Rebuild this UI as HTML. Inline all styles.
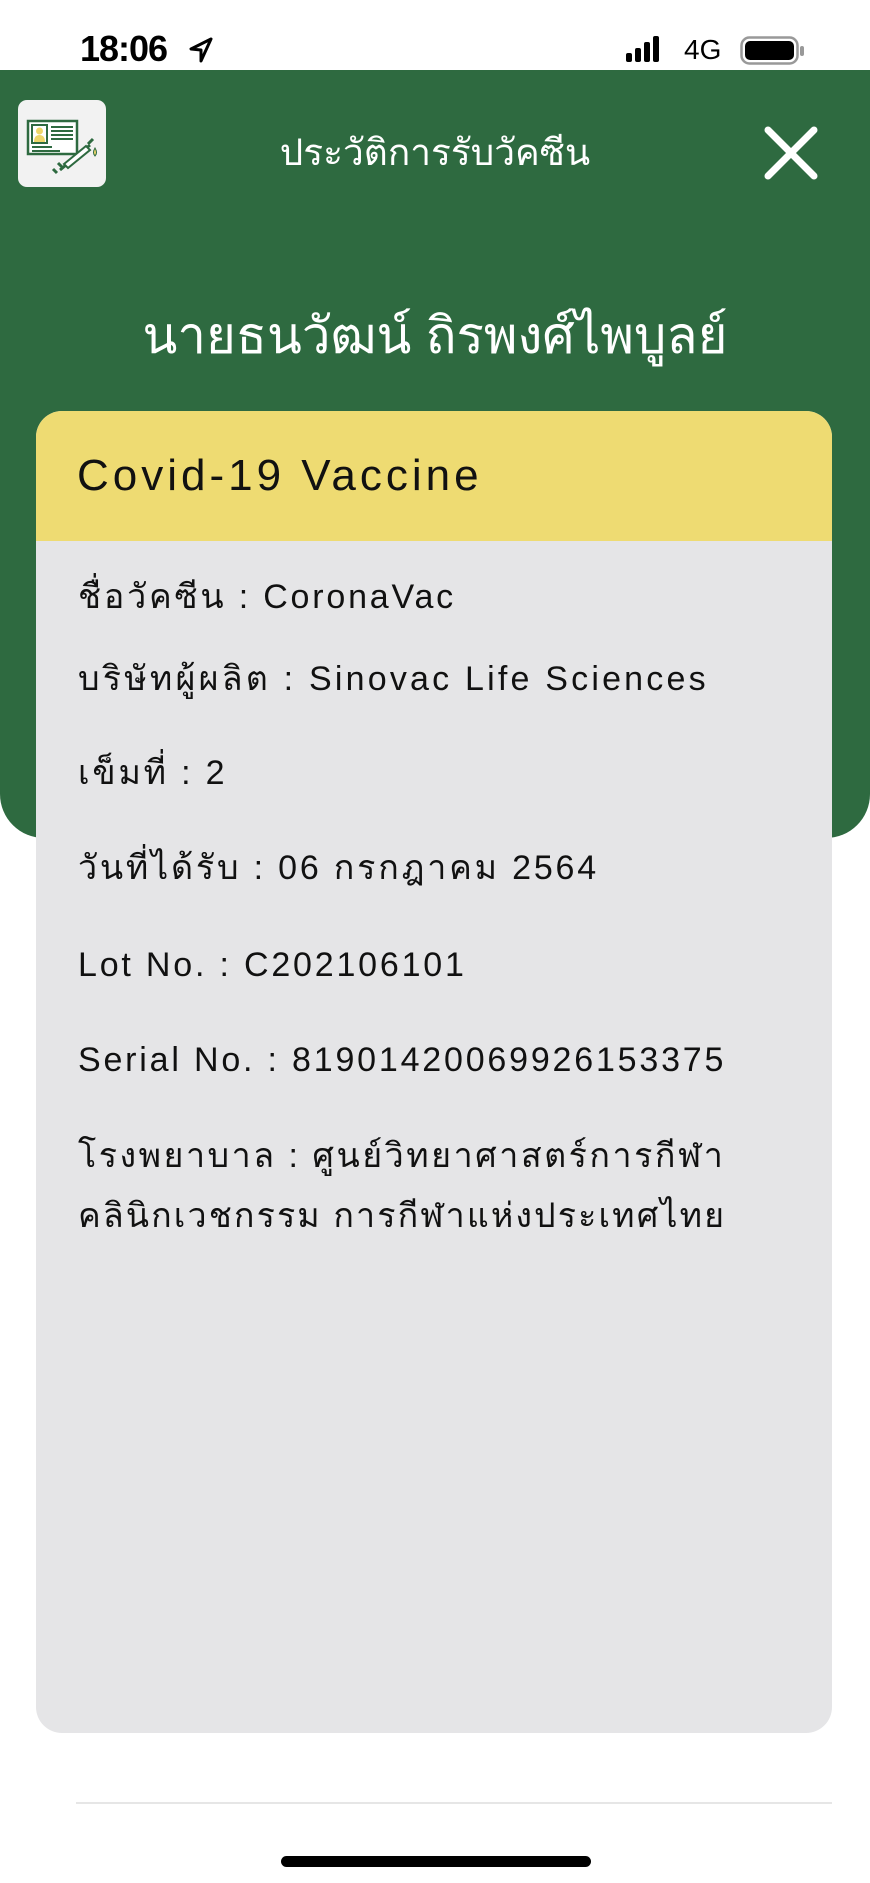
<!DOCTYPE html>
<html><head><meta charset="utf-8">
<style>
*{margin:0;padding:0;box-sizing:border-box}
body{width:870px;height:1883px;background:#fff;position:relative;overflow:hidden;font-family:"Liberation Sans","Noto Sans CJK SC",sans-serif}
.abs{position:absolute}
.green{left:0;top:70px;width:870px;height:768px;background:#2e6a40;border-radius:0 0 44px 44px}
.logo{left:18px;top:100px;width:88px;height:87px;background:#f2f2f2;border-radius:9px}
.title{left:0;width:870px;top:126px;text-align:center;color:#fff;font-size:37px;line-height:54px}
.name{left:0;width:870px;top:302px;text-align:center;color:#fff;font-size:51px;line-height:68px}
.card{left:36px;top:411px;width:796px;height:1322px;background:#e5e5e7;border-radius:26px;overflow:hidden}
.card .hd{height:130px;background:#eedb72;padding-left:41px;font-size:44px;letter-spacing:4px;line-height:130px;color:#111}
.line{left:78px;font-size:34px;letter-spacing:2.8px;color:#111;line-height:44px;white-space:nowrap}
</style></head><body>
<div class="abs" style="left:80px;top:28px;font-size:36px;font-weight:bold;color:#000;letter-spacing:-1px">18:06</div>
<svg class="abs" style="left:188px;top:36px" width="26" height="28" viewBox="0 0 26 28"><path d="M23 3 L3 13 L13 14 L13 25 Z" fill="none" stroke="#000" stroke-width="3" stroke-linejoin="round"/></svg>
<svg class="abs" style="left:626px;top:36px" width="48" height="28"><rect x="0" y="17" width="6" height="9" rx="2"/><rect x="9" y="12" width="6" height="14" rx="2"/><rect x="18" y="6" width="6" height="20" rx="2"/><rect x="27" y="0" width="6" height="26" rx="2"/></svg>
<div class="abs" style="left:684px;top:34px;font-size:28px;color:#000">4G</div>
<svg class="abs" style="left:740px;top:36px" width="66" height="30"><rect x="1.5" y="1.5" width="56" height="26" rx="8" fill="none" stroke="#999" stroke-width="2.5"/><rect x="5" y="5" width="49" height="19" rx="5" fill="#000"/><rect x="60" y="10" width="4" height="10" rx="2" fill="#999"/></svg>

<div class="abs green"></div>
<div class="abs logo"></div>
<svg class="abs" style="left:18px;top:100px" width="88" height="87" viewBox="0 0 88 87">
<rect x="10" y="21" width="49" height="33" fill="#fff" stroke="#2e6a40" stroke-width="2.5"/>
<rect x="14" y="25" width="15" height="18" fill="#fff" stroke="#2e6a40" stroke-width="2"/>
<path d="M16 42 Q16 35 21.5 35 Q27 35 27 42 Z" fill="#eed66a"/><circle cx="21.5" cy="31" r="3.5" fill="#eed66a"/>
<path d="M33 27h22M33 31h22M33 35h22M33 39h22M14 47h20M14 51h28" stroke="#2e6a40" stroke-width="2"/>
<path d="M42 70 L72 45 M45 68 L40 63 M39 73 L35 69 M65 48 L69 52 M70 44 L75 39" stroke="#2e6a40" stroke-width="3" fill="none"/>
<path d="M46 64 L68 46 L72 50 L50 68 Z" fill="#fff" stroke="#2e6a40" stroke-width="2"/>
<path d="M77 48 Q80 53 77 56 Q74 53 77 48Z" fill="#eed66a" stroke="#2e6a40" stroke-width="1"/>
</svg>
<div class="abs title">ประวัติการรับวัคซีน</div>
<svg class="abs" style="left:763px;top:125px" width="56" height="56"><path d="M5 5 L51 51 M51 5 L5 51" stroke="#fff" stroke-width="7" stroke-linecap="round"/></svg>
<div class="abs name">นายธนวัฒน์ ถิรพงศ์ไพบูลย์</div>

<div class="abs card"><div class="hd">Covid-19 Vaccine</div></div>
<div class="abs line" style="top:575px">ชื่อวัคซีน : CoronaVac</div>
<div class="abs line" style="top:657px;letter-spacing:3.2px">บริษัทผู้ผลิต : Sinovac Life Sciences</div>
<div class="abs line" style="top:751px">เข็มที่ : 2</div>
<div class="abs line" style="top:846px">วันที่ได้รับ : 06 กรกฎาคม 2564</div>
<div class="abs line" style="top:943px">Lot No. : C202106101</div>
<div class="abs line" style="top:1038px">Serial No. : 8190142006992615337​5</div>
<div class="abs line" style="top:1134px;letter-spacing:2.5px">โรงพยาบาล : ศูนย์วิทยาศาสตร์การกีฬา</div>
<div class="abs line" style="top:1194px;letter-spacing:2.1px">คลินิกเวชกรรม การกีฬาแห่งประเทศไทย</div>

<div class="abs" style="left:76px;top:1802px;width:756px;height:2px;background:#e6e6e6"></div>
<div class="abs" style="left:281px;top:1856px;width:310px;height:11px;background:#000;border-radius:6px"></div>
</body></html>
